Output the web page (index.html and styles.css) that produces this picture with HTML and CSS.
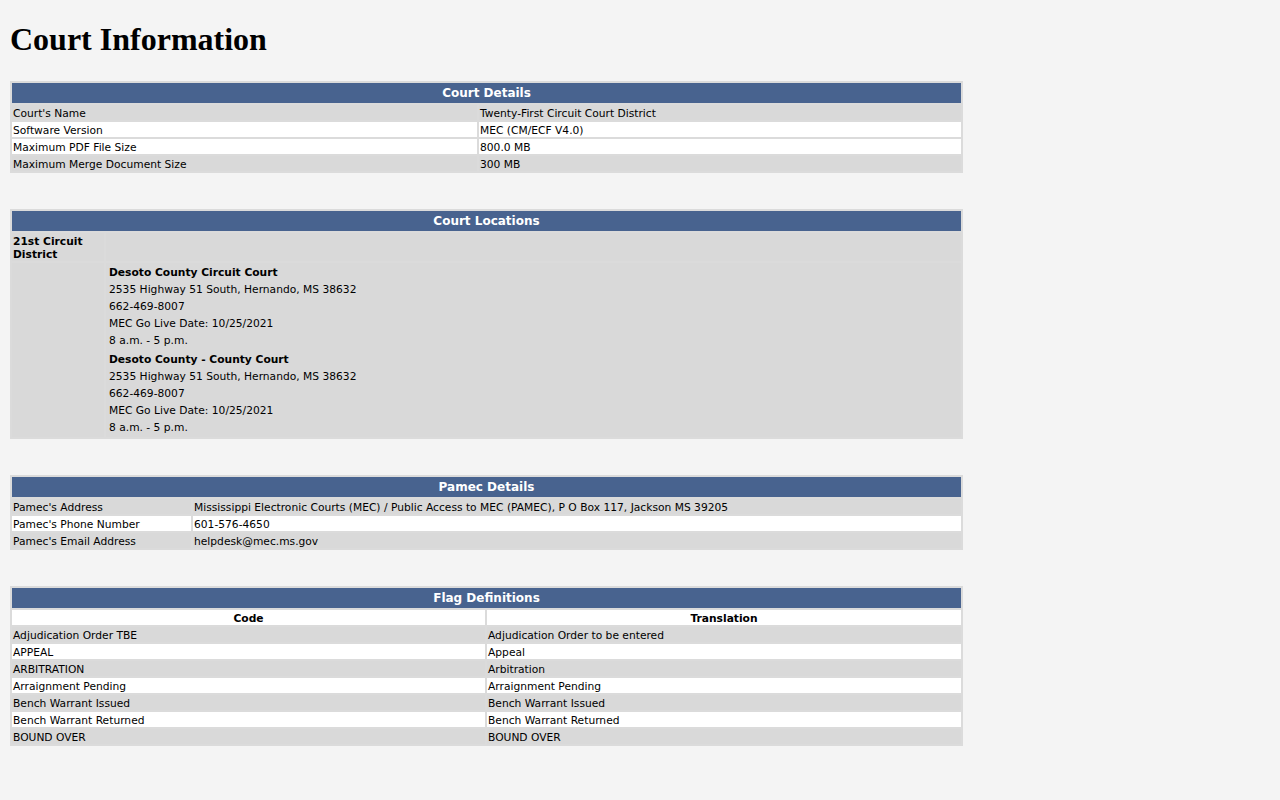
FILE: index.html
```html
<!DOCTYPE html>
<html>
<head>
<meta charset="utf-8">
<title>Court Information</title>
<link rel="stylesheet" href="styles.css">
</head>
<body>
<h1 class="title">Court Information</h1>

<table class="grid details">
  <colgroup><col class="c1"><col></colgroup>
  <tr><th colspan="2" class="head">Court Details</th></tr>
  <tr class="odd"><td>Court's Name</td><td>Twenty-First Circuit Court District</td></tr>
  <tr class="even"><td>Software Version</td><td>MEC (CM/ECF V4.0)</td></tr>
  <tr class="even"><td>Maximum PDF File Size</td><td>800.0 MB</td></tr>
  <tr class="odd"><td>Maximum Merge Document Size</td><td>300 MB</td></tr>
</table>

<table class="grid locations">
  <colgroup><col class="l1"><col></colgroup>
  <tr><th colspan="2" class="head">Court Locations</th></tr>
  <tr class="odd"><td class="district">21st Circuit District</td><td></td></tr>
  <tr class="odd">
    <td></td>
    <td class="courts">
      <table class="court">
        <tr><td class="name">Desoto County Circuit Court</td></tr>
        <tr><td>2535 Highway 51 South, Hernando, MS 38632</td></tr>
        <tr><td>662-469-8007</td></tr>
        <tr><td>MEC Go Live Date: 10/25/2021</td></tr>
        <tr><td>8 a.m. - 5 p.m.</td></tr>
      </table>
      <table class="court">
        <tr><td class="name">Desoto County - County Court</td></tr>
        <tr><td>2535 Highway 51 South, Hernando, MS 38632</td></tr>
        <tr><td>662-469-8007</td></tr>
        <tr><td>MEC Go Live Date: 10/25/2021</td></tr>
        <tr><td>8 a.m. - 5 p.m.</td></tr>
      </table>
    </td>
  </tr>
</table>

<table class="grid pamec">
  <colgroup><col class="p1"><col></colgroup>
  <tr><th colspan="2" class="head">Pamec Details</th></tr>
  <tr class="odd"><td>Pamec's Address</td><td>Mississippi Electronic Courts (MEC) / Public Access to MEC (PAMEC), P O Box 117, Jackson MS 39205</td></tr>
  <tr class="even"><td>Pamec's Phone Number</td><td>601-576-4650</td></tr>
  <tr class="odd"><td>Pamec's Email Address</td><td>helpdesk@mec.ms.gov</td></tr>
</table>

<table class="grid flags">
  <colgroup><col class="f1"><col></colgroup>
  <tr><th colspan="2" class="head">Flag Definitions</th></tr>
  <tr class="even"><th class="sub">Code</th><th class="sub">Translation</th></tr>
  <tr class="odd"><td>Adjudication Order TBE</td><td>Adjudication Order to be entered</td></tr>
  <tr class="even"><td>APPEAL</td><td>Appeal</td></tr>
  <tr class="odd"><td>ARBITRATION</td><td>Arbitration</td></tr>
  <tr class="even"><td>Arraignment Pending</td><td>Arraignment Pending</td></tr>
  <tr class="odd"><td>Bench Warrant Issued</td><td>Bench Warrant Issued</td></tr>
  <tr class="even"><td>Bench Warrant Returned</td><td>Bench Warrant Returned</td></tr>
  <tr class="odd"><td>BOUND OVER</td><td>BOUND OVER</td></tr>
</table>
</body>
</html>
```

FILE: styles.css
```css
html, body {
  margin: 0;
  padding: 0;
  background: #f4f4f4;
}

body {
  padding: 0 10px 10px 10px;
  font-family: "DejaVu Sans", Verdana, sans-serif;
  font-size: 10.7px;
  color: #000;
}

.title {
  font-family: "Liberation Serif", "Times New Roman", serif;
  font-size: 32px;
  font-weight: bold;
  margin: 21px 0 0 0;
  line-height: 37px;
  height: 37px;
  padding-bottom: 23px;
}

.grid {
  width: 953px;
  border-collapse: separate;
  border-spacing: 2px;
  background: #dbdbdb;
  margin-bottom: 36px;
  table-layout: fixed;
}

.grid td,
.grid th {
  padding: 2px 1px 0 1px;
  line-height: 13px;
  text-align: left;
  vertical-align: top;
  white-space: nowrap;
  overflow: hidden;
}

.grid th.head {
  background: #48638f;
  color: #ffffff;
  font-size: 12px;
  font-weight: bold;
  text-align: center;
  height: 20px;
  padding: 0;
  line-height: 20px;
  vertical-align: middle;
}

.odd td, .odd th { background: #d9d9d9; }
.even td, .even th { background: #ffffff; }

.details .c1 { width: 465px; }
.locations .l1 { width: 92px; }
.pamec .p1 { width: 179px; }
.flags .f1 { width: 473px; }

.grid th.sub {
  text-align: center;
  font-weight: bold;
}

.locations .district {
  font-weight: bold;
  white-space: normal;
}

.locations td.courts {
  padding: 0;
}

.court {
  border-collapse: separate;
  border-spacing: 2px;
  margin: 0;
}

.court td {
  padding: 1px;
  line-height: 13px;
  background: transparent;
  white-space: nowrap;
}

.court td.name {
  font-weight: bold;
}
```
